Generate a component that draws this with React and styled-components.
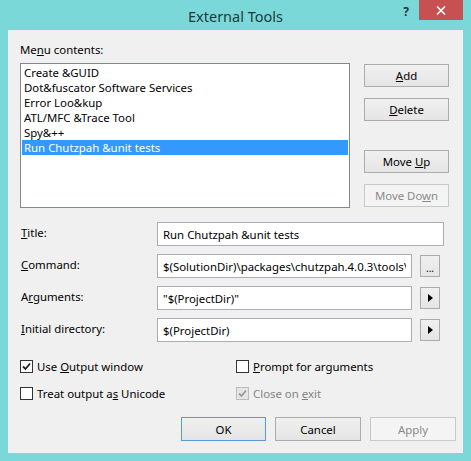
import React from 'react';
import styled, { createGlobalStyle } from 'styled-components';

const Global = createGlobalStyle`
  html, body { margin: 0; padding: 0; background: #7bd8d9; }
  body { font-family: "Noto Sans", "Open Sans", sans-serif; }
  * { box-sizing: border-box; }
`;

const FONT = `"Noto Sans", "Open Sans", sans-serif`;

const Window = styled.div`
  width: 471px;
  height: 461px;
  background: #7bd8d9;
  display: flex;
  flex-direction: column;
  font-family: ${FONT};
  font-size: 11.4px;
  color: #000;
`;

const TitleBar = styled.div`
  height: 30px;
  flex: none;
  display: grid;
  grid-template-columns: 1fr auto 1fr;
`;

const TitleText = styled.div`
  align-self: center;
  font-size: 14.5px;
  color: #1c3a3c;
  padding-top: 1px;
`;

const Controls = styled.div`
  display: flex;
  justify-content: flex-end;
  align-items: flex-start;
  padding-right: 8px;
`;

const HelpBtn = styled.div`
  font-weight: bold;
  font-size: 12px;
  color: #1c3a3c;
  margin-top: 3px;
  margin-right: 10px;
`;

const CloseBtn = styled.div`
  width: 44px;
  height: 20px;
  background: #c75050;
  display: flex;
  align-items: center;
  justify-content: center;
`;

const Client = styled.div`
  flex: 1;
  margin: 0 8px 8px 8px;
  background: #f0f0f0;
  padding: 12px 7px 0 12px;
  display: flex;
  flex-direction: column;
`;

const Label = styled.div`
  line-height: 16px;
  white-space: nowrap;
`;

const TopSection = styled.div`
  display: flex;
  margin-top: 5px;
`;

const List = styled.div`
  width: 330px;
  height: 145px;
  background: #fff;
  border: 1px solid #828790;
  padding: 1px;
`;

const ListItem = styled.div`
  height: 15px;
  line-height: 15px;
  padding-left: 2px;
  white-space: nowrap;
  background: ${p => (p.$selected ? '#3399ff' : 'transparent')};
  color: ${p => (p.$selected ? '#fff' : '#000')};
`;

const ButtonCol = styled.div`
  margin-left: 14px;
  display: flex;
  flex-direction: column;
`;

const Button = styled.div`
  width: ${p => p.$w || 85}px;
  height: ${p => p.$h || 23}px;
  margin-top: ${p => p.$mt || 0}px;
  border: 1px solid ${p => (p.$default ? '#5c9ad6' : p.$disabled ? '#c8c8c8' : '#acacac')};
  background: ${p => (p.$disabled ? '#f4f4f4' : 'linear-gradient(#f0f0f0, #e5e5e5)')};
  color: ${p => (p.$disabled ? '#8a8a8a' : '#000')};
  display: flex;
  align-items: center;
  justify-content: center;
  white-space: nowrap;
  flex: none;
`;

const Fields = styled.div`
  margin-top: 14px;
  display: flex;
  flex-direction: column;
  gap: 8px;
  padding-right: 12px;
`;

const FieldRow = styled.div`
  display: flex;
  align-items: center;
  height: 24px;
`;

const FieldLabel = styled.div`
  width: 137px;
  flex: none;
  padding-left: 1px;
  line-height: 16px;
  margin-top: -3px;
`;

const Input = styled.input`
  flex: 1;
  min-width: 0;
  height: 24px;
  border: 1px solid #abadb3;
  background: #fff;
  padding: 0 5px;
  font-family: ${FONT};
  font-size: 11.4px;
  color: #000;
  outline: none;
  margin: 0;
`;

const SideButton = styled(Button)`
  margin-left: 8px;
  margin-right: 4px;
  align-items: ${p => (p.$dots ? 'flex-end' : 'center')};
  padding-bottom: ${p => (p.$dots ? '3px' : '0')};
  font-size: 10px;
  line-height: 10px;
`;

const Checks = styled.div`
  margin-top: 16px;
  display: grid;
  grid-template-columns: 216px 1fr;
  row-gap: 11px;
`;

const CheckItem = styled.div`
  display: flex;
  align-items: center;
  gap: 4px;
  height: 16px;
  color: ${p => (p.$disabled ? '#838383' : '#000')};
`;

const Box = styled.div`
  width: 13px;
  height: 13px;
  border: 1px solid ${p => (p.$disabled ? '#bcbcbc' : '#333')};
  background: ${p => (p.$disabled ? '#e6e6e6' : '#fff')};
  display: flex;
  align-items: center;
  justify-content: center;
  flex: none;
`;

const Footer = styled.div`
  margin-top: 16px;
  display: flex;
  justify-content: flex-end;
  gap: 9px;
`;

const Check = ({ checked, disabled, children }) => (
  <CheckItem $disabled={disabled}>
    <Box $disabled={disabled}>
      {checked && (
        <svg width="9" height="9" viewBox="0 0 9 9">
          <path d="M1 4.5 L3.5 7 L8 1.5" fill="none" stroke={disabled ? '#9a9a9a' : '#222'} strokeWidth="1.8" />
        </svg>
      )}
    </Box>
    <span>{children}</span>
  </CheckItem>
);

const Arrow = () => (
  <svg width="5" height="8" viewBox="0 0 5 8">
    <polygon points="0,0 5,4 0,8" fill="#000" />
  </svg>
);

const items = [
  'Create &GUID',
  'Dot&fuscator Software Services',
  'Error Loo&kup',
  'ATL/MFC &Trace Tool',
  'Spy&++',
  'Run Chutzpah &unit tests',
];

export default function App() {
  return (
    <>
      <Global />
      <Window>
        <TitleBar>
          <div />
          <TitleText>External Tools</TitleText>
          <Controls>
            <HelpBtn>?</HelpBtn>
            <CloseBtn>
              <svg width="10" height="9" viewBox="0 0 10 9">
                <path d="M1 0.5 L9 8.5 M9 0.5 L1 8.5" stroke="#fff" strokeWidth="1.6" />
              </svg>
            </CloseBtn>
          </Controls>
        </TitleBar>
        <Client>
          <Label>Me<u>n</u>u contents:</Label>
          <TopSection>
            <List>
              {items.map((t, i) => (
                <ListItem key={t} $selected={i === items.length - 1}>{t}</ListItem>
              ))}
            </List>
            <ButtonCol>
              <Button $mt={1}><span><u>A</u>dd</span></Button>
              <Button $mt={11}><span><u>D</u>elete</span></Button>
              <Button $mt={29}><span>Move <u>U</u>p</span></Button>
              <Button $mt={11} $disabled><span>Move Do<u>w</u>n</span></Button>
            </ButtonCol>
          </TopSection>
          <Fields>
            <FieldRow>
              <FieldLabel><u>T</u>itle:</FieldLabel>
              <Input readOnly value="Run Chutzpah &unit tests" />
            </FieldRow>
            <FieldRow>
              <FieldLabel><u>C</u>ommand:</FieldLabel>
              <Input readOnly value="$(SolutionDir)\packages\chutzpah.4.0.3\tools\chutzpah.console.exe" />
              <SideButton $w={20} $h={22} $dots>...</SideButton>
            </FieldRow>
            <FieldRow>
              <FieldLabel>A<u>r</u>guments:</FieldLabel>
              <Input readOnly value={'"$(ProjectDir)"'} />
              <SideButton $w={20} $h={22}><Arrow /></SideButton>
            </FieldRow>
            <FieldRow>
              <FieldLabel><u>I</u>nitial directory:</FieldLabel>
              <Input readOnly value="$(ProjectDir)" />
              <SideButton $w={20} $h={22}><Arrow /></SideButton>
            </FieldRow>
          </Fields>
          <Checks>
            <Check checked><span>Use <u>O</u>utput window</span></Check>
            <Check><span><u>P</u>rompt for arguments</span></Check>
            <Check><span>Treat output a<u>s</u> Unicode</span></Check>
            <Check checked disabled><span>Close on <u>e</u>xit</span></Check>
          </Checks>
          <Footer>
            <Button $h={24} $default>OK</Button>
            <Button $h={24} $w={86}>Cancel</Button>
            <Button $h={24} $w={86} $disabled>Apply</Button>
          </Footer>
        </Client>
      </Window>
    </>
  );
}
